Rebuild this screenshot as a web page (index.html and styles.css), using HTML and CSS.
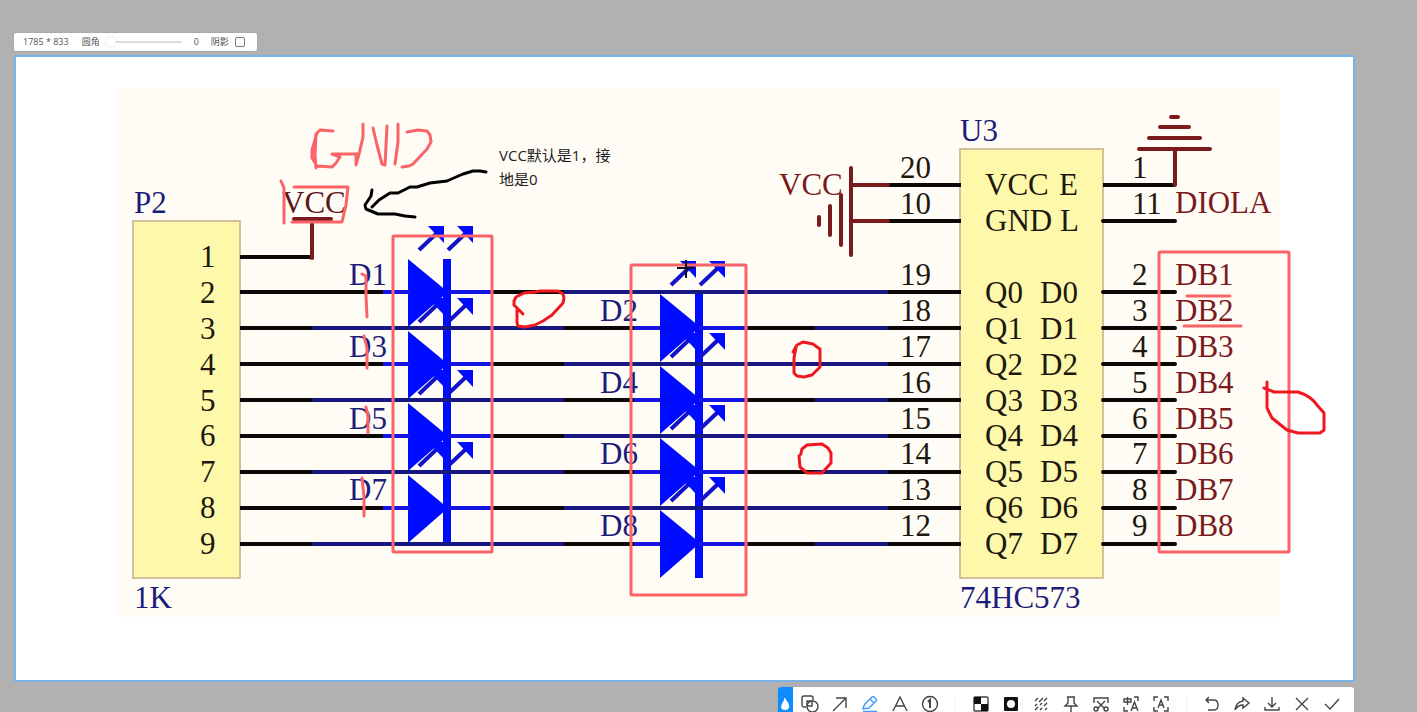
FILE: index.html
```html
<!DOCTYPE html>
<html lang="zh-CN">
<head>
<meta charset="utf-8">
<title>Screenshot editor</title>
<link rel="stylesheet" href="styles.css">
</head>
<body>
<div class="editor">
  <div class="info-bar">
    <span class="size">1785 * 833</span>
    <label class="radius-label" for="radius">圆角</label>
    <input class="radius" id="radius" type="range" min="0" max="100" value="0">
    <output class="radius-value" for="radius">0</output>
    <label class="shadow-label" for="shadow">阴影</label>
    <input class="shadow" id="shadow" type="checkbox">
  </div>

  <main class="canvas">
    <svg class="schematic" viewBox="16 57 1337 623" role="img" aria-label="74HC573 LED schematic">
      <defs>
        <g id="ray">
          <path class="ray-line" d="M419 250L438 232"/>
          <path class="led-fill" d="M428 226H444V243Z"/>
        </g>
        <g id="led">
          <path class="led-fill" d="M408 259L448 292L408 327ZM443 259H451V327H443Z"/>
          <use href="#ray"/>
          <use href="#ray" x="29"/>
        </g>
        <g id="led-column">
          <path class="led-fill" d="M443 259H451V543H443Z"/>
          <use href="#led"/>
          <use href="#led" y="72"/>
          <use href="#led" y="144"/>
          <use href="#led" y="216"/>
        </g>
        <g id="row-odd">
          <path class="wire" d="M240 292H383M493 292H564M888 292H961"/>
          <path class="wire navy" d="M564 292H888"/>
          <path class="wire blue" d="M383 292H410M447 292H493"/>
        </g>
        <g id="row-even">
          <path class="wire" d="M240 328H312M564 328H634M746 328H815M888 328H961"/>
          <path class="wire navy" d="M312 328H564M815 328H888"/>
          <path class="wire blue" d="M634 328H662M698 328H746"/>
        </g>
      </defs>

      <rect class="paper" x="118" y="88" width="1162" height="529"/>
      <rect class="chip" x="133" y="221" width="107" height="357"/>
      <rect class="chip" x="960" y="149" width="143" height="429"/>

      <use href="#led-column"/>
      <use href="#led-column" x="252" y="35"/>

      <use href="#row-odd"/><use href="#row-even"/>
      <use href="#row-odd" y="72"/><use href="#row-even" y="72"/>
      <use href="#row-odd" y="144"/><use href="#row-even" y="144"/>
      <use href="#row-odd" y="216"/><use href="#row-even" y="216"/>

      <path class="wire" d="M240 257H312M888 185H961M888 221H961M1103 185H1175"/>
      <path class="wire round" d="M1103 221H1175M1103 292H1175M1103 328H1175M1103 364H1175M1103 400H1175M1103 436H1175M1103 472H1175M1103 508H1175M1103 544H1175"/>
      <path class="wire power" d="M294 219H331M312 224V258M851 168V255M841 195V245M830 206V235M819 217V225M851 185H888M851 221H888"/>
      <path class="wire power" d="M1139 149H1210M1149 138H1200M1160 127H1189M1171 117H1178M1175 149V185"/>

      <g class="text navy-text">
        <text x="134" y="213">P2</text>
        <text x="134" y="608">1K</text>
        <text x="960" y="141">U3</text>
        <text x="960" y="608">74HC573</text>
        <text x="349" y="285">D1</text>
        <text x="349" y="357">D3</text>
        <text x="349" y="429">D5</text>
        <text x="349" y="500">D7</text>
        <text x="600" y="321">D2</text>
        <text x="600" y="393">D4</text>
        <text x="600" y="464">D6</text>
        <text x="600" y="536">D8</text>
      </g>
      <g class="text">
        <text x="200" y="267">1</text>
        <text x="200" y="303">2</text>
        <text x="200" y="339">3</text>
        <text x="200" y="375">4</text>
        <text x="200" y="411">5</text>
        <text x="200" y="446">6</text>
        <text x="200" y="482">7</text>
        <text x="200" y="518">8</text>
        <text x="200" y="554">9</text>

        <text x="900" y="178">20</text>
        <text x="900" y="214">10</text>
        <text x="900" y="285">19</text>
        <text x="900" y="321">18</text>
        <text x="900" y="357">17</text>
        <text x="900" y="393">16</text>
        <text x="900" y="429">15</text>
        <text x="900" y="464">14</text>
        <text x="900" y="500">13</text>
        <text x="900" y="536">12</text>

        <text x="985" y="195">VCC</text>
        <text x="985" y="231">GND</text>
        <text x="985" y="303">Q0</text>
        <text x="985" y="339">Q1</text>
        <text x="985" y="375">Q2</text>
        <text x="985" y="411">Q3</text>
        <text x="985" y="446">Q4</text>
        <text x="985" y="482">Q5</text>
        <text x="985" y="518">Q6</text>
        <text x="985" y="554">Q7</text>

        <text x="1059" y="195">E</text>
        <text x="1060" y="231">L</text>
        <text x="1040" y="303">D0</text>
        <text x="1040" y="339">D1</text>
        <text x="1040" y="375">D2</text>
        <text x="1040" y="411">D3</text>
        <text x="1040" y="446">D4</text>
        <text x="1040" y="482">D5</text>
        <text x="1040" y="518">D6</text>
        <text x="1040" y="554">D7</text>

        <text x="1132" y="178">1</text>
        <text x="1132" y="214">11</text>
        <text x="1132" y="285">2</text>
        <text x="1132" y="321">3</text>
        <text x="1132" y="357">4</text>
        <text x="1132" y="393">5</text>
        <text x="1132" y="429">6</text>
        <text x="1132" y="464">7</text>
        <text x="1132" y="500">8</text>
        <text x="1132" y="536">9</text>
      </g>
      <g class="text red-text">
        <text class="dim" x="282" y="213">VCC</text>
        <text x="779" y="195">VCC</text>
        <text x="1175" y="213">DIOLA</text>
        <text x="1175" y="285">DB1</text>
        <text x="1175" y="321">DB2</text>
        <text x="1175" y="357">DB3</text>
        <text x="1175" y="393">DB4</text>
        <text x="1175" y="429">DB5</text>
        <text x="1175" y="464">DB6</text>
        <text x="1175" y="500">DB7</text>
        <text x="1175" y="536">DB8</text>
      </g>

      <g class="mark">
        <rect x="393" y="236" width="99" height="316" rx="1"/>
        <rect x="631" y="265" width="115" height="330" rx="1"/>
        <rect x="1159" y="252" width="130" height="300" rx="1"/>
        <path d="M333 131L320 130L317 133L312 150V158L317 166L332 167L336 163L340 157L332 154H358M316 134L315 155L316 168"/>
        <path d="M363 124V137L360 150L356 165V155M373 128L377 145L382 164L385 165L387 126M398 124V142L395 164"/>
        <path d="M407 132L418 130L427 131L430 135L431 142L427 149L413 164L409 166L402 167"/>
        <path d="M281 181L284 188V223M294 187H348L346 205L342 222H292"/>
        <path d="M362 274L366 276V295L367 317M364 336L367 348V368M366 407L368 416V433M362 478L364 497V516"/>
        <path d="M1187 296H1230M1184 326H1241"/>
      </g>
      <g class="pen">
        <path d="M523 314L514 305V301L516 297L524 293L535 292L540 291H558L563 294L564 298L563 303L552 315L543 321L535 325L525 327L518 326L517 323V310"/>
        <path d="M793 352L797 345L803 342L813 344L817 347L820 349V367L812 375L804 377L797 376L794 373V358L796 348"/>
        <path d="M801 453L802 449L807 445L822 444L828 448L831 453V463L822 473H807L800 467L799 456L801 454"/>
        <path d="M1267 382V408L1272 418L1287 430L1298 433H1320L1324 430V413L1317 405Q1311 396 1298 392H1274L1264 388"/>
      </g>
      <path class="pen ink" d="M486 172L480 171H473L463 174L447 181L430 183L417 187H410L398 193H390L379 200L372 207M372 190L371 196L365 205L366 209L378 214H395L405 216L415 217"/>
      <path class="cursor" d="M677 268H694M686 260V278"/>

      <text class="note" x="499" y="161">VCC默认是1，接</text>
      <text class="note" x="499" y="185">地是0</text>
    </svg>
  </main>

  <div class="toolbar" role="toolbar" aria-label="Tools">
    <button class="tab" aria-label="Handle"><svg viewBox="0 0 15 34"><path class="solid" d="M7 11Q8 11 8 13Q12 17 11 21Q10 23 7 23Q4 23 3 21Q3 17 6 13Q6 11 7 11Z"/></svg></button>
    <button class="tool" aria-label="Shape"><svg viewBox="0 0 18 18"><path d="M5 12H3Q1 12 1 10V3Q1 1 3 1H10Q12 1 12 3V5"/><circle cx="11.5" cy="11.5" r="5.5"/><path d="M6 6H11V11H8Q6 11 6 9Z"/></svg></button>
    <button class="tool" aria-label="Arrow"><svg viewBox="0 0 18 18"><path d="M2 16L15 3M5 3H15V13"/></svg></button>
    <button class="tool active" aria-label="Pen"><svg viewBox="0 0 18 18"><path d="M2 13L4 9L11 2Q12 1 13 2L15 4Q16 5 15 6L8 13L2 14ZM9 4L13 8M2 16.500H16"/></svg></button>
    <button class="tool" aria-label="Text"><svg viewBox="0 0 18 18"><path d="M2 16L9 2L16 16M5 11H13"/></svg></button>
    <button class="tool" aria-label="Number"><svg viewBox="0 0 18 18"><circle cx="9" cy="9" r="7.500"/><path class="bold" d="M7 7L9 5V13"/></svg></button>
    <span class="divider"></span>
    <button class="tool" aria-label="Mosaic"><svg viewBox="0 0 18 18"><rect x="2" y="2" width="14" height="14" rx="1"/><path class="dark" d="M2 2H9V9H2ZM9 9H16V16H9Z"/></svg></button>
    <button class="tool" aria-label="Spotlight"><svg viewBox="0 0 18 18"><rect class="dark" x="2" y="2" width="14" height="14" rx="1"/><circle class="solid" cx="9" cy="9" r="4"/></svg></button>
    <button class="tool" aria-label="Hatch"><svg viewBox="0 0 18 18"><path d="M3 6L6 3M3 11L5 9M7 7L11 3M3 15L6 12M8 10L10 8M12 6L15 3M8 15L10 13M12 11L15 8M13 15L15 13"/></svg></button>
    <button class="tool" aria-label="Pin"><svg viewBox="0 0 18 18"><path d="M5 2H13M6 2V8L3 11H15L12 8V2M9 11V17"/></svg></button>
    <button class="tool" aria-label="Crop"><svg viewBox="0 0 18 18"><path d="M2 8V3H16V8M5 6L13 14M13 6L5 14"/><circle cx="4" cy="14" r="2"/><circle cx="14" cy="14" r="2"/></svg></button>
    <button class="tool" aria-label="Translate"><svg viewBox="0 0 18 18"><path d="M2 4H9V7H2ZM5.500 2V10M12 2H16V6M2 12V16H6M9 16L12.500 7L16 16M10 13H15"/></svg></button>
    <button class="tool" aria-label="Recognize text"><svg viewBox="0 0 18 18"><path d="M2 6V2H6M12 2H16V6M2 12V16H6M12 16H16V12M6 13L9 5L12 13M7 10H11"/></svg></button>
    <span class="divider"></span>
    <button class="tool" aria-label="Undo"><svg viewBox="0 0 18 18"><path d="M6 2L3 5L6 8M3 5H11Q15 5 15 10Q15 15 11 15H5"/></svg></button>
    <button class="tool" aria-label="Redo"><svg viewBox="0 0 18 18"><path d="M10 3L16 8L10 13V10Q5 10 2 15Q3 7 10 6Z"/></svg></button>
    <button class="tool" aria-label="Save"><svg viewBox="0 0 18 18"><path d="M9 2V11M5 8L9 12L13 8M2 12V15H16V12"/></svg></button>
    <button class="tool" aria-label="Cancel"><svg viewBox="0 0 18 18"><path d="M3 3L15 15M15 3L3 15"/></svg></button>
    <button class="tool" aria-label="Done"><svg viewBox="0 0 18 18"><path d="M2 9L7 14L16 4"/></svg></button>
  </div>
</div>
</body>
</html>
```
FILE: styles.css
```css
* {
  box-sizing: border-box;
}

body {
  margin: 0;
  height: 100vh;
  overflow: hidden;
  background: #b1b1b1;
  font-family: "Open Sans", "Noto Sans CJK SC", sans-serif;
}

.editor {
  display: flex;
  flex-direction: column;
  padding: 33px 62px 0 14px;
}

.info-bar {
  display: flex;
  align-items: center;
  align-self: flex-start;
  height: 18px;
  margin-bottom: 4px;
  padding: 0 12px 0 9px;
  border-radius: 2px;
  background: #fff;
  box-shadow: 0 0 2px #999;
  color: #555;
  font-size: 9px;
  line-height: 18px;
  white-space: nowrap;
}

.radius-label {
  margin-left: 13px;
}

.radius {
  appearance: none;
  width: 76px;
  height: 10px;
  margin: 0 0 0 6px;
  background: linear-gradient(#ddd, #ddd) center / 100% 2px no-repeat;
}

.radius::-webkit-slider-thumb {
  appearance: none;
  width: 10px;
  height: 10px;
  border-radius: 50%;
  background: #fff;
  box-shadow: 0 0 2px #ccc;
}

.radius-value {
  margin-left: 12px;
}

.shadow-label {
  margin-left: 12px;
}

.shadow {
  appearance: none;
  width: 10px;
  height: 10px;
  margin: 0 0 0 6px;
  border: 1px solid #777;
  border-radius: 2px;
}

.canvas {
  border: 2px solid #78b4e8;
  background: #fff;
}

.schematic {
  display: block;
  width: 100%;
  height: auto;
}

.paper {
  fill: #fffcf5;
}

.chip {
  fill: #fef8ab;
  stroke: #d6bf9c;
  stroke-width: 2;
}

.wire {
  fill: none;
  stroke: #0c0808;
  stroke-width: 4;
}

.wire.navy {
  stroke: #171780;
}

.wire.blue {
  stroke: #1414e6;
}

.wire.power {
  stroke: #7b1a1c;
  stroke-linecap: round;
}

.wire.round {
  stroke-linecap: round;
}

.led-fill {
  fill: #000cff;
}

.ray-line {
  stroke: #1212c8;
  stroke-width: 4;
}

.text {
  fill: #1c1810;
  font-family: "Liberation Serif", serif;
  font-size: 31px;
}

.navy-text {
  fill: #1c1c7c;
}

.red-text {
  fill: #7b1a1c;
}

.red-text .dim {
  fill: #5c1618;
}

.mark {
  fill: none;
  stroke: #fa6468;
  stroke-width: 3;
  stroke-linecap: round;
  stroke-linejoin: round;
}

.pen {
  fill: none;
  stroke: #f01820;
  stroke-width: 3;
  stroke-linecap: round;
  stroke-linejoin: round;
}

.pen.ink {
  stroke: #000;
}

.cursor {
  stroke: #101020;
  stroke-width: 2;
}

.note {
  fill: #222;
  font-size: 15px;
}

.toolbar {
  display: flex;
  align-self: flex-end;
  height: 34px;
  margin-top: 5px;
  margin-right: 1px;
  padding-right: 7px;
  border-radius: 3px;
  background: #fff;
  box-shadow: 0 0 2px #999;
}

.tab,
.tool {
  display: flex;
  align-items: center;
  justify-content: center;
  padding: 0;
  border: 0;
  background: none;
}

.tab {
  width: 15px;
  margin-right: 2px;
  border-radius: 3px 0 0 0;
  background: #0c8cff;
}

.tab svg {
  width: 15px;
  height: 34px;
}

.tool {
  width: 30px;
  color: #444;
}

.tool.active {
  color: #3d9df5;
}

.tool svg {
  width: 18px;
  height: 18px;
  fill: none;
  stroke: currentColor;
  stroke-width: 1.4;
}

.tool .bold {
  stroke-width: 2;
}

.tool .solid,
.tab .solid {
  fill: #fff;
  stroke: none;
}

.tool .dark {
  fill: #111;
  stroke: none;
}

.divider {
  width: 1px;
  height: 12px;
  margin: 11px 10px;
  background: #eee;
}
```
